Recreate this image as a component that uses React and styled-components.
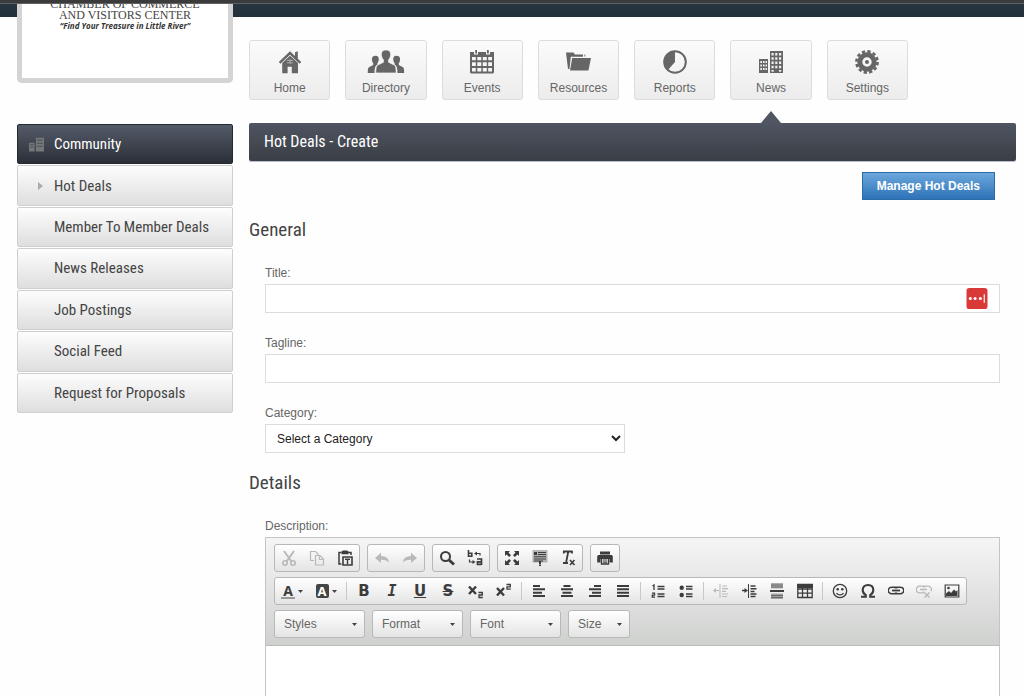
import React from "react";
import styled, { createGlobalStyle, css } from "styled-components";

const GlobalStyle = createGlobalStyle`
  * {
    box-sizing: border-box;
  }
  body {
    margin: 0;
    background: #fefefe;
    color: #555;
    font: 12px/16px "Liberation Sans", Arial, sans-serif;
  }
  a {
    text-decoration: none;
    color: inherit;
  }
`;

const narrowFont = css`
  font-family: "Roboto Condensed", "Open Sans Condensed", "Liberation Sans", sans-serif;
`;

/* ---------- main navigation icons ---------- */

const navIcons = {
  home: (
    <>
      <path d="M12 1.200.800 12l1.600 1.800L12 4.700l9.600 9.100 1.600-1.800-3.400-3.300V1.200L17 2.200v3.900z" />
      <path d="M12 5.700 4.200 13v10.200h5.400v-6.400h4.200v6.400H20V13z" />
      <path d="M9 10.500h6M9 12.800h6M12 8.800v5" stroke="#bbb" strokeWidth=".800" />
    </>
  ),
  directory: (
    <>
      <path d="M1.800 5.800c2 0 3.100 1.500 3 3.600-.1 1.600-.6 2.700-1.400 3.600v1.600c-2 1-2.800 3.200-2.900 8.300h-6.700c0-4 .4-5.300 1.600-5.900l3.800-1.900V13c-.8-.9-1.200-2-1.300-3.600-.1-2.100 1-3.600 3.900-3.600z" />
      <path d="M22.200 5.800c-2 0-3.100 1.500-3 3.600.1 1.600.6 2.700 1.400 3.600v1.600c2 1 2.800 3.200 2.900 8.300h6.700c0-4-.4-5.300-1.600-5.900l-3.800-1.900V13c.8-.9 1.200-2 1.300-3.600.1-2.100-1-3.600-3.900-3.600z" />
      <path
        d="M12 0c3.200 0 4.800 2 4.600 4.600-.2 2.400-.9 4-2.100 5.200v2.500l5.400 2.600c1.600.8 2.200 2.500 2.200 8H1.900c0-5.500.6-7.200 2.200-8l5.400-2.600V9.800C8.300 8.600 7.600 7 7.400 4.600 7.200 2 8.800 0 12 0z"
        stroke="#f5f5f5"
        strokeWidth=".600"
      />
    </>
  ),
  events: (
    <>
      <path d="M0 2h4v2.500h4V2h8v2.500h4V2h4v20.500l-1 1H1l-1-1z" />
      <path d="M5.200 0h1.800v3.500H5.200zM17 0h1.800v3.500H17z" />
      <path
        d="M2 7h3.800v3.200H2zM7.300 7h4v3.200h-4zM12.800 7h4v3.200h-4zM18.200 7H22v3.200h-3.800zM2 12.300h3.800v3.600H2zM7.300 12.300h4v3.600h-4zM12.800 12.300h4v3.600h-4zM18.200 12.300H22v3.600h-3.800zM2 18h3.800v3.500H2zM7.300 18h4v3.500h-4zM12.800 18h4v3.500h-4zM18.200 18H22v3.500h-3.800z"
        fill="#f6f6f6"
      />
    </>
  ),
  resources: (
    <>
      <path d="M0 2.500h7.500l1.300 2H17v2.200H4.800L3.500 19H2z" />
      <path d="M18 4.500h1.500v2H18z" opacity=".6" />
      <path d="M6.200 8H25l-2.600 12.500H4z" />
    </>
  ),
  reports: (
    <>
      <circle cx="12" cy="12" r="10.800" fill="none" stroke="#666" strokeWidth="2" />
      <path d="M12 1v11l-7.300 8.300C-1.500 14 1 2 12 1z" />
    </>
  ),
  news: (
    <>
      <path d="M0 9h9v14H0zM11 1h13v22H11z" />
      <path
        d="M1.300 11H3v2H1.300zM4 11h1.600v2H4zM6.500 11H8v2H6.500zM1.300 14.500H3v2H1.300zM4 14.500h1.600v2H4zM6.500 14.500H8v2H6.500zM1.300 18H3v2H1.300zM4 18h1.600v2H4zM6.500 18H8v2H6.500zM12.500 3h2.200v2.500h-2.200zM16.200 3h2.200v2.500h-2.200zM20 3h2.200v2.500H20zM12.500 7.200h2.200v2.500h-2.200zM16.200 7.200h2.200v2.500h-2.200zM20 7.200h2.200v2.500H20zM12.500 11.500h2.200V14h-2.200zM16.200 11.500h2.200V14h-2.200zM20 11.500h2.200V14H20zM12.500 15.800h2.200v2.500h-2.200zM16.200 15.800h2.200v2.500h-2.200zM20 15.800h2.200v2.500H20zM12.500 20h2.200v1.800h-2.200zM20 20h2.200v1.800H20z"
        fill="#eee"
      />
    </>
  ),
  settings: (
    <>
      <circle cx="12" cy="12" r="10.600" fill="none" stroke="#666" strokeWidth="2.600" strokeDasharray="3.300 2.250" />
      <circle cx="12" cy="12" r="7.200" fill="none" stroke="#666" strokeWidth="5" />
      <circle cx="12" cy="12" r="2" />
    </>
  ),
};

/* ---------- editor icons, 16px grid ---------- */

const line = (d, width = 2) => <path d={d} fill="none" stroke="currentColor" strokeWidth={width} />;

const editorIcons = {
  cut: (
    <>
      {line("M3 1l7.500 10.500M13 1 5.500 11.500", 2)}
      <circle cx="4" cy="13" r="2.200" fill="none" stroke="currentColor" strokeWidth="1.600" />
      <circle cx="12" cy="13" r="2.200" fill="none" stroke="currentColor" strokeWidth="1.600" />
    </>
  ),
  copy: line("M5 10.500H1.500v-9h5l2.500 2.500v1M6.500 5.500h4.500l3.500 3.500v6h-8zM10.500 5.500v4h4", 1.2),
  paste: (
    <>
      {line("M4.500 2.500h-2.500v11.500h2.500M11 2.500h3v2.500", 1.5)}
      <path d="M4.500 1.500 6 .5h4l1.500 1v2.700h-7z" />
      {line("M6 7h9v8H6z", 1.6)}
      {line("M8 9.200h5M10.500 9.200v5", 1.4)}
    </>
  ),
  undo: <path d="M1 8l6-5.200v3.500c4.500 0 7.500 1.500 8.200 6.300-2-2.300-4.300-3-8.200-2.900v3.400z" />,
  redo: <path d="M15 8 9 2.800v3.500C4.500 6.300 1.500 7.800.8 12.600c2-2.300 4.300-3 8.200-2.900v3.400z" />,
  find: (
    <>
      <circle cx="6.500" cy="6.500" r="4.500" fill="none" stroke="currentColor" strokeWidth="2" />
      {line("M10 10l5 4.500", 3)}
    </>
  ),
  replace: (
    <>
      {line("M1.500 0v7M1.500 6.200h3.300V3.200H1.500", 1.6)}
      {line("M10 9h4.500v6M14.200 11.800h-3.700v2.600h3.700", 1.7)}
      {line("M9.500 3.500h3.500v2M2.500 9.500v2.500h4", 1.2)}
      <path d="M7 3.500 10 1.500v4zM8.500 12l-3-2v4z" />
    </>
  ),
  maximize: (
    <>
      <path d="M1 1h5L4.500 2.500l2.500 2.700L5.200 7 2.500 4.500 1 6zM15 1h-5l1.500 1.500L9 5.200 10.800 7l2.700-2.500L15 6zM1 15h5l-1.500-1.500L7 10.800 5.200 9l-2.700 2.500L1 10zM15 15h-5l1.500-1.500L9 10.800 10.800 9l2.700 2.500L15 10z" />
    </>
  ),
  blocks: (
    <>
      <path d="M.500 0h15v12.500H.500z" opacity=".35" />
      <path d="M2 2h3v3H2zM6 2h8v1H6zM6 4h8v1H6zM2 6.200h12v1H2zM2 8.400h12v1H2zM2 10.500h9v1H2zM7 11.500h2v3H7zM7 15h2v1H7z" />
    </>
  ),
  removeFormat: (
    <>
      {line("M3 1.500h9.500M3.800 1v2.500M12 1v2.500M8.300 1.500 6 13M3 13h5", 1.8)}
      {line("M10 10l4.500 5M14.500 10 10 15", 1.6)}
    </>
  ),
  print: (
    <>
      <path d="M3 1.500h10v3H3zM1 5h14l.8 1.500v6H12.500V9h-9v3.500H.200v-6z" />
      {line("M4.500 8v6h7V8", 1.4)}
      <path d="M6 8.500h4v1H6zM6 10.500h4v1H6zM6 12.300h4v1H6z" />
    </>
  ),
  subscript: (
    <>
      {line("M1 3.500l7 7.500M8 3.500 1 11", 2.4)}
      {line("M10.500 9.500h3.800v2.500h-3.300v2.500h3.800", 1.3)}
    </>
  ),
  superscript: (
    <>
      {line("M1 5l7 7.500M8 5 1 12.500", 2.4)}
      {line("M10.500 1.500h3.800v2.300h-3.300v2.400h3.800", 1.3)}
    </>
  ),
  left: line("M2 3h7M2 6.300h12M2 9.700h9M2 13h12", 2),
  center: line("M4.500 3h7M2 6.300h12M3.500 9.700h9M2 13h12", 2),
  right: line("M7 3h7M2 6.300h12M5 9.700h9M2 13h12", 2),
  justify: line("M2 3h12M2 6.300h12M2 9.700h12M2 13h12", 2),
  numbered: (
    <>
      {line("M7.500 3.500h7M7.500 6h7M7.500 11h7M7.500 13.500h7", 1.3)}
      {line("M2.500 3 4 2v5M2 10.200h2.500v2H2.300v2h2.700", 1.3)}
    </>
  ),
  bulleted: (
    <>
      {line("M8 3.500h6.500M8 6h6.500M8 11h6.500M8 13.500h6.500", 1.3)}
      <circle cx="3.700" cy="4.700" r="2.200" />
      <circle cx="3.700" cy="12" r="2.200" />
    </>
  ),
  outdent: (
    <>
      {line("M7 1v14", 1)}
      {line("M9 3h5M9 5.700h6M9 8.400h4M9 11h6M9 13.500h5M1.500 7.500h4.500", 1.2)}
      <path d="M0 7.500 3 5v5z" />
    </>
  ),
  indent: (
    <>
      {line("M7.500 1v14", 1)}
      {line("M9.500 3h5M9.500 5.700h6M9.500 8.400h4M9.500 11h6M9.500 13.500h5M1 7.500h3", 1.5)}
      <path d="M7 7.500 3.500 5v5z" />
    </>
  ),
  rule: (
    <>
      <path d="M2 0h12v5.500H2zM2 10.500h12V16H2z" opacity=".4" />
      {line("M2 2h12M2 4h12M2 12.500h12M2 14.500h12", 0.6)}
      {line("M1 8h14", 2)}
    </>
  ),
  table: (
    <>
      {line("M.800 1.500h14.400v13H.800zM1 6h14M1 10.200h14M5.500 5v9.500M10.500 5v9.500", 1.3)}
      <path d="M.200 1h15.600v4H.200z" />
    </>
  ),
  smiley: (
    <>
      <circle cx="8" cy="8" r="6.700" fill="none" stroke="currentColor" strokeWidth="1.300" />
      <circle cx="5.700" cy="6.300" r="1.300" />
      <circle cx="10.300" cy="6.300" r="1.300" />
      {line("M4.500 10c1.500 2.600 5.500 2.600 7 0", 1.2)}
    </>
  ),
  omega: line("M1 13.800h4.800v-1.600C3.600 10.800 2.700 9 2.700 7c0-3.300 2.200-5 5.300-5s5.300 1.700 5.300 5c0 2-.9 3.800-3.100 5.200v1.600H15", 2.1),
  link: (
    <>
      {line("M7.400 5.500V4.200H3.600a3.300 3.300 0 0 0 0 6.600h3.800V9.500M8.600 5.500V4.200h3.800a3.300 3.300 0 0 1 0 6.600H8.600V9.500", 1.5)}
      {line("M4 7.500h8", 1.8)}
    </>
  ),
  unlink: (
    <>
      {line("M7.400 4.500V3.200H3.600a3.300 3.300 0 0 0 0 6.600h3.800V8.500M8.600 4.500V3.200h3.800a3.300 3.300 0 0 1 2.500 5M4 6.500h7", 1.3)}
      {line("M8.500 9.500l5 5M13.500 9.500l-5 5", 1.5)}
    </>
  ),
  image: (
    <>
      {line("M1.200 2h13.600v12H1.200z", 1.2)}
      <path d="M2 13v-2.500l3-2.500 2 2 3-3.500 2 2 1.500-1.500V13z" />
      <circle cx="4.500" cy="5" r="1.300" />
    </>
  ),
};

const navItems = [
  { label: "Home", icon: "home" },
  { label: "Directory", icon: "directory" },
  { label: "Events", icon: "events" },
  { label: "Resources", icon: "resources" },
  { label: "Reports", icon: "reports" },
  { label: "News", icon: "news", active: true },
  { label: "Settings", icon: "settings" },
];

const sideItems = [
  "Hot Deals",
  "Member To Member Deals",
  "News Releases",
  "Job Postings",
  "Social Feed",
  "Request for Proposals",
];

const topGroups = [
  [["cut", true], ["copy", true], ["paste"]],
  [["undo", true], ["redo", true]],
  [["find"], ["replace"]],
  [["maximize"], ["blocks"], ["removeFormat"]],
  [["print"]],
];

const formatGroups = [
  [["left"], ["center"], ["right"], ["justify"]],
  [["numbered"], ["bulleted"]],
  [["outdent", true], ["indent"], ["rule"], ["table"]],
  [["smiley"], ["omega"], ["link"], ["unlink", true], ["image"]],
];

const NavIcon = ({ name }) => (
  <NavSvg viewBox="0 0 24 24" aria-hidden="true">
    {navIcons[name]}
  </NavSvg>
);

const ToolButton = ({ name, dim }) => (
  <Tool type="button" aria-label={name} $dim={dim}>
    <ToolSvg viewBox="0 0 16 16" aria-hidden="true">
      {editorIcons[name]}
    </ToolSvg>
  </Tool>
);

const Caret = () => (
  <CaretSvg viewBox="0 0 5 3" aria-hidden="true">
    <path d="M0 0h5L2.500 3z" />
  </CaretSvg>
);

const Combo = ({ label, small }) => (
  <ComboBox $small={small}>
    <ComboSelect aria-label={label}>
      <option>{label}</option>
    </ComboSelect>
    <Caret />
  </ComboBox>
);

const Editor = () => (
  <EditorBox>
    <Toolbar>
      <ToolRow>
        {topGroups.map((group, i) => (
          <ToolGroup key={i}>
            {group.map(([name, dim]) => (
              <ToolButton key={name} name={name} dim={dim} />
            ))}
          </ToolGroup>
        ))}
      </ToolRow>
      <ToolRow>
        <ToolGroup>
          <ColorTool type="button" aria-label="Text color">
            <TextColor>A</TextColor>
            <Caret />
          </ColorTool>
          <ColorTool type="button" aria-label="Background color">
            <FillColor>A</FillColor>
            <Caret />
          </ColorTool>
          <Separator />
          <Tool type="button"><Glyph>B</Glyph></Tool>
          <Tool type="button"><Glyph as="em" $serif>I</Glyph></Tool>
          <Tool type="button"><Glyph as="u">U</Glyph></Tool>
          <Tool type="button"><Glyph as="s">S</Glyph></Tool>
          <ToolButton name="subscript" />
          <ToolButton name="superscript" />
          {formatGroups.map((group, i) => (
            <React.Fragment key={i}>
              <Separator />
              {group.map(([name, dim]) => (
                <ToolButton key={name} name={name} dim={dim} />
              ))}
            </React.Fragment>
          ))}
        </ToolGroup>
      </ToolRow>
      <ToolRow>
        <Combo label="Styles" />
        <Combo label="Format" />
        <Combo label="Font" />
        <Combo label="Size" small />
      </ToolRow>
    </Toolbar>
    <EditorArea id="description" />
  </EditorBox>
);

const App = () => (
  <>
    <GlobalStyle />
    <BrowserEdge />
    <Page>
      <Side>
        <Logo>
          <LogoName>CHAMBER OF COMMERCE</LogoName>
          <LogoName>AND VISITORS CENTER</LogoName>
          <LogoMotto>“Find Your Treasure in Little River”</LogoMotto>
        </Logo>
        <SideMenu>
          <SideTitle href="#community">
            <SideIcon viewBox="0 0 24 24" aria-hidden="true">
              <path d="M0 9h9v14H0zM11 1h13v22H11z" />
              <path d="M2 12h5M2 16h5M13 5h9M13 10h9M13 15h9" stroke="#54575c" strokeWidth="2" />
            </SideIcon>
            Community
          </SideTitle>
          {sideItems.map((item, i) => (
            <SideItem href="#" key={item}>
              {i === 0 && (
                <SideArrow viewBox="0 0 5 8" aria-hidden="true">
                  <path d="M0 0l5 4-5 4z" />
                </SideArrow>
              )}
              {item}
            </SideItem>
          ))}
        </SideMenu>
      </Side>
      <Main>
        <Nav>
          {navItems.map((item) => (
            <NavItem href="#" key={item.label} $active={item.active}>
              <NavIcon name={item.icon} />
              {item.label}
            </NavItem>
          ))}
        </Nav>
        <TitleBar>Hot Deals - Create</TitleBar>
        <Actions>
          <ManageButton type="button">Manage Hot Deals</ManageButton>
        </Actions>
        <Section>
          <SectionTitle>General</SectionTitle>
          <Fields>
            <Field>
              <Label htmlFor="title">Title:</Label>
              <InputWrap>
                <Input id="title" type="text" />
                <PasswordBadge viewBox="0 0 22 22" aria-hidden="true">
                  <rect width="22" height="22" rx="3" fill="#d93a37" />
                  <circle cx="4" cy="11" r="1.600" />
                  <circle cx="9" cy="11" r="1.600" />
                  <circle cx="14.500" cy="11" r="1.600" />
                  <path d="M18 6.500h1.200v9H18z" />
                </PasswordBadge>
              </InputWrap>
            </Field>
            <Field>
              <Label htmlFor="tagline">Tagline:</Label>
              <Input id="tagline" type="text" />
            </Field>
            <Field>
              <Label htmlFor="category">Category:</Label>
              <Select id="category">
                <option>Select a Category</option>
              </Select>
            </Field>
          </Fields>
        </Section>
        <Section>
          <SectionTitle>Details</SectionTitle>
          <Fields>
            <Field>
              <Label htmlFor="description">Description:</Label>
              <Editor />
            </Field>
          </Fields>
        </Section>
      </Main>
    </Page>
  </>
);

const BrowserEdge = styled.div`
  height: 4px;
  background: #3b3b3b;
  border-bottom: 1px solid #606060;
`;

const Page = styled.div`
  display: grid;
  grid-template-columns: 216px 1fr;
  gap: 16px;
  padding: 0 8px 0 17px;
  background: linear-gradient(#263540, #22303b) no-repeat 0 0 / 100% 13px;
`;

const Side = styled.aside`
  display: flex;
  flex-direction: column;
  gap: 41px;
`;

const Logo = styled.div`
  display: flex;
  flex-direction: column;
  justify-content: flex-end;
  align-items: center;
  height: 79px;
  padding-bottom: 48px;
  overflow: hidden;
  border: 5px solid #d4d4d4;
  border-top: 0;
  border-radius: 0 0 5px 5px;
  background: #fff;
  white-space: nowrap;
`;

const LogoName = styled.div`
  font: 12px/11px "Liberation Serif", serif;
  color: #444;
`;

const LogoMotto = styled.div`
  font: italic bold 8px/9px "Open Sans", "Noto Sans", sans-serif;
  color: #333;
`;

/* the seven rows share the menu's height */
const SideMenu = styled.nav`
  display: flex;
  flex-direction: column;
  gap: 1px;
  height: 289px;
`;

const SideItem = styled.a`
  ${narrowFont}
  position: relative;
  display: flex;
  flex: 1;
  align-items: center;
  padding-left: 36px;
  border: 1px solid #cfcfcf;
  border-radius: 2px;
  background: linear-gradient(#fdfdfd, #dedede);
  color: #444;
  font-size: 15px;
  line-height: 20px;
`;

const SideTitle = styled(SideItem)`
  border-color: #252932;
  background: linear-gradient(#545b68, #2b2f38);
  color: #fff;
`;

const SideIcon = styled.svg`
  position: absolute;
  left: 11px;
  width: 15px;
  height: 15px;
  fill: #74777a;
`;

const SideArrow = styled.svg`
  position: absolute;
  left: 20px;
  width: 5px;
  height: 8px;
  fill: #aaa;
`;

const Main = styled.main`
  min-width: 0;
  padding-top: 36px;
`;

const Nav = styled.nav`
  display: grid;
  grid-template-columns: repeat(7, 1fr);
  gap: 15px;
  max-width: 659px;
`;

const NavItem = styled.a`
  position: relative;
  display: flex;
  flex-direction: column;
  align-items: center;
  gap: 6px;
  height: 60px;
  padding-top: 9px;
  border: 1px solid #dcdcdc;
  border-radius: 3px;
  background: linear-gradient(#fbfbfb, #ececec);
  color: #666;

  ${(props) =>
    props.$active &&
    css`
      &::after {
        content: "";
        position: absolute;
        top: 70px;
        left: 50%;
        margin-left: -10px;
        border: 10px solid transparent;
        border-top: 0;
        border-bottom: 12px solid #4f5561;
      }
    `}
`;

const NavSvg = styled.svg`
  width: 24px;
  height: 24px;
  overflow: visible;
  fill: #666;
`;

const TitleBar = styled.h1`
  ${narrowFont}
  margin: 23px 0 0;
  padding: 0 15px;
  border-radius: 2px;
  background: linear-gradient(#4f5561, #3a3e45);
  box-shadow: 0 1px 0 #b9bfcc;
  color: #fff;
  font-size: 16px;
  font-weight: normal;
  line-height: 38px;
`;

const Actions = styled.div`
  display: flex;
  justify-content: flex-end;
  padding: 11px 21px 0;
`;

const ManageButton = styled.button`
  height: 28px;
  padding: 0 14px;
  border: 1px solid #2e6ca8;
  background: linear-gradient(#6ca7dc, #2d73b8);
  color: #fff;
  font: bold 12px/16px "Liberation Sans", Arial, sans-serif;
`;

const Section = styled.section`
  padding-top: 18px;
`;

const SectionTitle = styled.h2`
  ${narrowFont}
  margin: 0 0 22px;
  color: #444;
  font-size: 19px;
  font-weight: normal;
  line-height: 24px;
`;

const Fields = styled.div`
  display: flex;
  flex-direction: column;
  gap: 21px;
  padding: 0 16px;
`;

const Field = styled.div`
  display: flex;
  flex-direction: column;
  gap: 2px;
`;

const Label = styled.label`
  color: #666;
  line-height: 18px;
`;

const InputWrap = styled.div`
  position: relative;
  display: flex;
`;

const Input = styled.input`
  width: 100%;
  height: 29px;
  padding: 0 8px;
  border: 1px solid #dcdcdc;
  background: #fff;
  font: inherit;
`;

const PasswordBadge = styled.svg`
  position: absolute;
  top: 4px;
  right: 12px;
  width: 22px;
  height: 21px;
  fill: #fff;
`;

const Select = styled.select`
  width: 49%;
  height: 29px;
  padding: 0 0 0 7px;
  border: 1px solid #dcdcdc;
  border-radius: 0;
  background: #fff;
  color: #222;
  font: inherit;
`;

const EditorBox = styled.div`
  border: 1px solid #c4c4c4;
  background: #fff;
`;

const Toolbar = styled.div`
  display: flex;
  flex-direction: column;
  gap: 5px;
  padding: 6px 8px 7px;
  border-bottom: 1px solid #bbb;
  background: linear-gradient(#f5f5f5, #cfd1cf);
`;

const ToolRow = styled.div`
  display: flex;
  gap: 7px;
`;

const ToolGroup = styled.div`
  display: flex;
  align-items: center;
  height: 28px;
  border: 1px solid #b8b8b8;
  border-radius: 3px;
  background: linear-gradient(#fff, #e4e4e4);
`;

const Tool = styled.button`
  display: flex;
  align-items: center;
  justify-content: center;
  width: 28px;
  height: 26px;
  padding: 0;
  border: 0;
  background: none;
  color: ${(props) => (props.$dim ? "#b9b9b9" : "#3c3c3c")};
`;

const ColorTool = styled(Tool)`
  width: 34px;
  gap: 3px;
`;

const ToolSvg = styled.svg`
  width: 16px;
  height: 16px;
  fill: currentColor;
`;

const CaretSvg = styled.svg`
  width: 5px;
  height: 3px;
  fill: #444;
`;

const Glyph = styled.span`
  font: bold 15px/18px ${(props) => (props.$serif ? '"DejaVu Sans Mono", monospace' : '"DejaVu Sans", sans-serif')};
  font-style: ${(props) => (props.$serif ? "italic" : "normal")};
`;

const TextColor = styled.span`
  padding: 0 2px;
  border-bottom: 2px solid #999;
  font: bold 14px/13px "Noto Sans", sans-serif;
`;

const FillColor = styled.span`
  padding: 0 2px;
  border-radius: 2px;
  background: #444;
  color: #fff;
  font: bold 13px/14px "Noto Sans", sans-serif;
`;

const Separator = styled.span`
  width: 1px;
  height: 18px;
  margin: 0 3px;
  background: #c8c8c8;
`;

const ComboBox = styled.div`
  display: flex;
  align-items: center;
  width: ${(props) => (props.$small ? "62px" : "91px")};
  height: 28px;
  padding-right: 7px;
  border: 1px solid #b8b8b8;
  border-radius: 3px;
  background: linear-gradient(#fff, #e4e4e4);
`;

const ComboSelect = styled.select`
  flex: 1;
  min-width: 0;
  height: 26px;
  padding: 0 0 0 9px;
  border: 0;
  appearance: none;
  background: none;
  color: #666;
  font: inherit;
`;

const EditorArea = styled.textarea`
  display: block;
  width: 100%;
  height: 200px;
  border: 0;
  resize: none;
  background: #fff;
`;

export default App;
